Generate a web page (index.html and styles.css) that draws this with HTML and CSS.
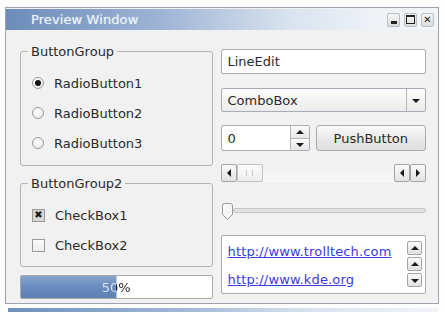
FILE: index.html
```html
<!DOCTYPE html>
<html lang="en">
<head>
  <meta charset="UTF-8">
  <title>Preview Window</title>
  <link rel="stylesheet" href="styles.css">
</head>
<body>

  <div class="window">
    <div class="titlebar">
      <span class="title">Preview Window</span>
      <div class="title-buttons">
        <span class="tbtn"><span class="min-glyph"></span></span>
        <span class="tbtn"><span class="max-glyph"></span></span>
        <span class="tbtn close">&#10005;</span>
      </div>
    </div>

    <div class="content">
      <div class="col left">
        <fieldset class="group">
          <legend>ButtonGroup</legend>
          <div class="row"><span class="radio checked"></span>RadioButton1</div>
          <div class="row"><span class="radio"></span>RadioButton2</div>
          <div class="row"><span class="radio"></span>RadioButton3</div>
        </fieldset>

        <fieldset class="group group2">
          <legend>ButtonGroup2</legend>
          <div class="row"><span class="check checked">&#10006;</span>CheckBox1</div>
          <div class="row"><span class="check"></span>CheckBox2</div>
        </fieldset>

        <div class="progress" style="background-size: 50% 100%">
          <span class="progress-label">50%</span>
        </div>
      </div>

      <div class="col right">
        <div class="lineedit">LineEdit</div>

        <div class="combo">
          <span class="combo-text">ComboBox</span>
          <span class="combo-btn"><span class="arrow down"></span></span>
        </div>

        <div class="spin-row">
          <div class="spin">
            <span class="spin-text">0</span>
            <span class="spin-btns">
              <span class="spin-btn"><span class="arrow up"></span></span>
              <span class="spin-btn"><span class="arrow down"></span></span>
            </span>
          </div>
          <div class="pushbutton">PushButton</div>
        </div>

        <div class="scrollbar">
          <span class="sbtn"><span class="arrow left"></span></span>
          <span class="handle"><span class="grip"></span></span>
          <span class="track"></span>
          <span class="sbtn"><span class="arrow left"></span></span>
          <span class="sbtn"><span class="arrow right"></span></span>
        </div>

        <div class="slider">
          <svg class="slider-handle" width="13" height="18" viewBox="0 0 13 18">
            <path d="M1.5 2.5 Q1.5 0.5 3.5 0.5 H9.5 Q11.5 0.5 11.5 2.5 V11.5 L6.5 16.5 L1.5 11.5 Z" fill="#f4f4f4" stroke="#9a9a9a"/>
            <path d="M3 3 V11" stroke="#ffffff"/>
          </svg>
          <span class="groove"></span>
        </div>

        <div class="listbox">
          <div class="links">
            <a href="#">http://www.trolltech.com</a>
            <a href="#">http://www.kde.org</a>
          </div>
          <div class="vbtns">
            <span class="vbtn"><span class="arrow up"></span></span>
            <span class="vbtn"><span class="arrow up"></span></span>
            <span class="vbtn"><span class="arrow down"></span></span>
          </div>
        </div>
      </div>
    </div>
  </div>

  <div class="next-window"></div>

</body>
</html>
```

FILE: styles.css
```css
body {
  margin: 0;
  background: #fdfdfd;
  font-family: "DejaVu Sans", Verdana, sans-serif;
  font-size: 13px;
  color: #2a2a2a;
  overflow: hidden;
}

.window {
  margin: 7px 0 0 5px;
  width: 434px;
  height: 297px;
  border: 1px solid #9ca3ad;
  background: #f1f1f1;
  box-sizing: border-box;
}

.titlebar {
  display: flex;
  align-items: center;
  justify-content: space-between;
  height: 21px;
  margin-top: 1px;
  padding: 0 4px 0 25px;
  background: linear-gradient(to right, #6c8cba 0%, #9cb3d4 35%, #d8e2ee 65%, #eef2f7 85%, #f2f4f7 100%);
}

.title {
  color: #eaf1f9;
  letter-spacing: 0.1px;
  text-shadow: 0 0 1px #c9d8ea;
}

.title-buttons {
  display: flex;
  gap: 4px;
}

.tbtn {
  width: 13px;
  height: 14px;
  box-sizing: border-box;
  border: 1px solid #b8bec6;
  border-radius: 2px;
  background: linear-gradient(#f6f6f6, #dcdcdc);
  display: flex;
  align-items: center;
  justify-content: center;
  font-size: 10px;
  font-weight: bold;
  color: #222;
  line-height: 1;
}

.min-glyph {
  width: 6px;
  height: 3px;
  background: #222;
  margin-top: 5px;
}

.max-glyph {
  width: 7px;
  height: 6px;
  border: 1px solid #222;
  border-top-width: 2px;
}

.content {
  display: flex;
  gap: 8px;
  padding: 0 12px 0 14px;
}

.col {
  display: flex;
  flex-direction: column;
}

.left {
  width: 193px;
}

.right {
  width: 206px;
}

/* group boxes */
.group {
  margin: 14px 0 0 0;
  padding: 9px 10px 7px 11px;
  border: 1px solid #b3b3b3;
  border-radius: 3px;
  min-width: 0;
}

.group legend {
  padding: 0 3px;
  margin-left: -4px;
  line-height: 15px;
}

.group2 {
  margin-top: 10px;
  padding-bottom: 6px;
}

.row {
  height: 30px;
  display: flex;
  align-items: center;
  gap: 10px;
}

.radio {
  width: 12px;
  height: 12px;
  box-sizing: border-box;
  border-radius: 50%;
  border: 1px solid #9a9a9a;
  background: radial-gradient(circle at 40% 35%, #ffffff, #e4e4e4);
  display: flex;
  align-items: center;
  justify-content: center;
}

.radio.checked::after {
  content: "";
  width: 6px;
  height: 6px;
  border-radius: 50%;
  background: #111;
}

.check {
  width: 13px;
  height: 13px;
  box-sizing: border-box;
  border: 1px solid #9a9a9a;
  background: linear-gradient(#fafafa, #ececec);
  display: flex;
  align-items: center;
  justify-content: center;
  font-size: 10px;
  line-height: 1;
  color: #1a1a1a;
}

.check.checked {
  background: #d6d6d6;
}

/* progress */
.progress {
  margin-top: 8px;
  height: 24px;
  border: 1px solid #a9a9a9;
  border-radius: 2px;
  background-color: #ffffff;
  background-image: linear-gradient(#86a3cc, #6a8bbd 50%, #5f80b2);
  background-repeat: no-repeat;
  box-sizing: border-box;
  display: flex;
  align-items: center;
  justify-content: center;
}

.progress-label {
  background: linear-gradient(to right, #dbe6f5 50%, #222 50%);
  -webkit-background-clip: text;
  background-clip: text;
  color: transparent;
}

/* right column */
.lineedit {
  margin-top: 19px;
  height: 25px;
  box-sizing: border-box;
  border: 1px solid #a7adb6;
  border-radius: 2px;
  background: #fff;
  padding-left: 6px;
  display: flex;
  align-items: center;
}

.combo {
  margin-top: 14px;
  height: 24px;
  box-sizing: border-box;
  border: 1px solid #a7adb6;
  border-radius: 2px;
  background: linear-gradient(#fbfbfb, #ececec);
  display: flex;
  align-items: stretch;
}

.combo-text {
  flex: 1;
  padding-left: 6px;
  display: flex;
  align-items: center;
}

.combo-btn {
  width: 18px;
  border-left: 1px solid #b5b5b5;
  display: flex;
  align-items: center;
  justify-content: center;
}

.spin-row {
  margin-top: 13px;
  height: 26px;
  display: flex;
  gap: 6px;
}

.spin {
  width: 89px;
  box-sizing: border-box;
  border: 1px solid #a7adb6;
  border-radius: 2px;
  background: #fff;
  display: flex;
}

.spin-text {
  flex: 1;
  padding-left: 6px;
  display: flex;
  align-items: center;
}

.spin-btns {
  width: 18px;
  display: flex;
  flex-direction: column;
  border-left: 1px solid #b5b5b5;
}

.spin-btn {
  flex: 1;
  display: flex;
  align-items: center;
  justify-content: center;
  background: linear-gradient(#fafafa, #e6e6e6);
}

.spin-btn + .spin-btn {
  border-top: 1px solid #b5b5b5;
}

.pushbutton {
  flex: 1;
  box-sizing: border-box;
  border: 1px solid #a9a9a9;
  border-radius: 3px;
  background: linear-gradient(#fafafa, #e9e9e9 50%, #dedede);
  display: flex;
  align-items: center;
  justify-content: center;
}

.scrollbar {
  margin-top: 13px;
  height: 18px;
  display: flex;
  width: 205px;
}

.sbtn {
  width: 16px;
  box-sizing: border-box;
  border: 1px solid #a5a5a5;
  border-radius: 2px;
  background: linear-gradient(#fafafa, #e2e2e2);
  display: flex;
  align-items: center;
  justify-content: center;
}

.handle {
  width: 26px;
  box-sizing: border-box;
  border: 1px solid #c2c2c2;
  border-radius: 2px;
  background: linear-gradient(#fcfcfc, #ececec);
  display: flex;
  align-items: center;
  justify-content: center;
}

.grip {
  width: 5px;
  height: 6px;
  border-left: 1px solid #c8c8c8;
  border-right: 1px solid #c8c8c8;
}

.track {
  flex: 1;
  background: linear-gradient(#f0f0f0, #f8f8f8);
}

.slider {
  margin-top: 19px;
  height: 18px;
  display: flex;
  align-items: center;
}

.slider-handle {
  flex: none;
  margin-top: 3px;
}

.groove {
  flex: 1;
  height: 3px;
  margin-left: -1px;
  background: #e2e2e2;
  border: 1px solid #c7c7c7;
  border-radius: 2px;
}

.listbox {
  margin-top: 16px;
  height: 59px;
  box-sizing: border-box;
  border: 1px solid #a7adb6;
  border-radius: 2px;
  background: #fff;
  display: flex;
  justify-content: space-between;
  padding: 5px 3px 4px 6px;
}

.links {
  display: flex;
  flex-direction: column;
  gap: 11px;
  padding-top: 2px;
}

.links a {
  color: #3a3adf;
  line-height: 17px;
  letter-spacing: 0.15px;
}

.vbtns {
  display: flex;
  flex-direction: column;
  gap: 2px;
}

.vbtn {
  width: 15px;
  height: 14px;
  box-sizing: border-box;
  border: 1px solid #a5a5a5;
  border-radius: 2px;
  background: linear-gradient(#fafafa, #e2e2e2);
  display: flex;
  align-items: center;
  justify-content: center;
}

/* small triangle arrows */
.arrow {
  width: 0;
  height: 0;
  border: 4px solid transparent;
}

.arrow.down {
  border-top: 4px solid #1a1a1a;
  border-bottom: 0;
  margin-top: 1px;
}

.arrow.up {
  border-bottom: 4px solid #1a1a1a;
  border-top: 0;
}

.arrow.left {
  border-right: 4px solid #1a1a1a;
  border-left: 0;
}

.arrow.right {
  border-left: 4px solid #1a1a1a;
  border-right: 0;
}

.next-window {
  margin: 4px 0 0 8px;
  width: 430px;
  height: 10px;
  background: linear-gradient(to right, #6f8fbc 0%, #9fb6d6 40%, #d8e2ee 70%, #f2f4f7 100%);
}
```
